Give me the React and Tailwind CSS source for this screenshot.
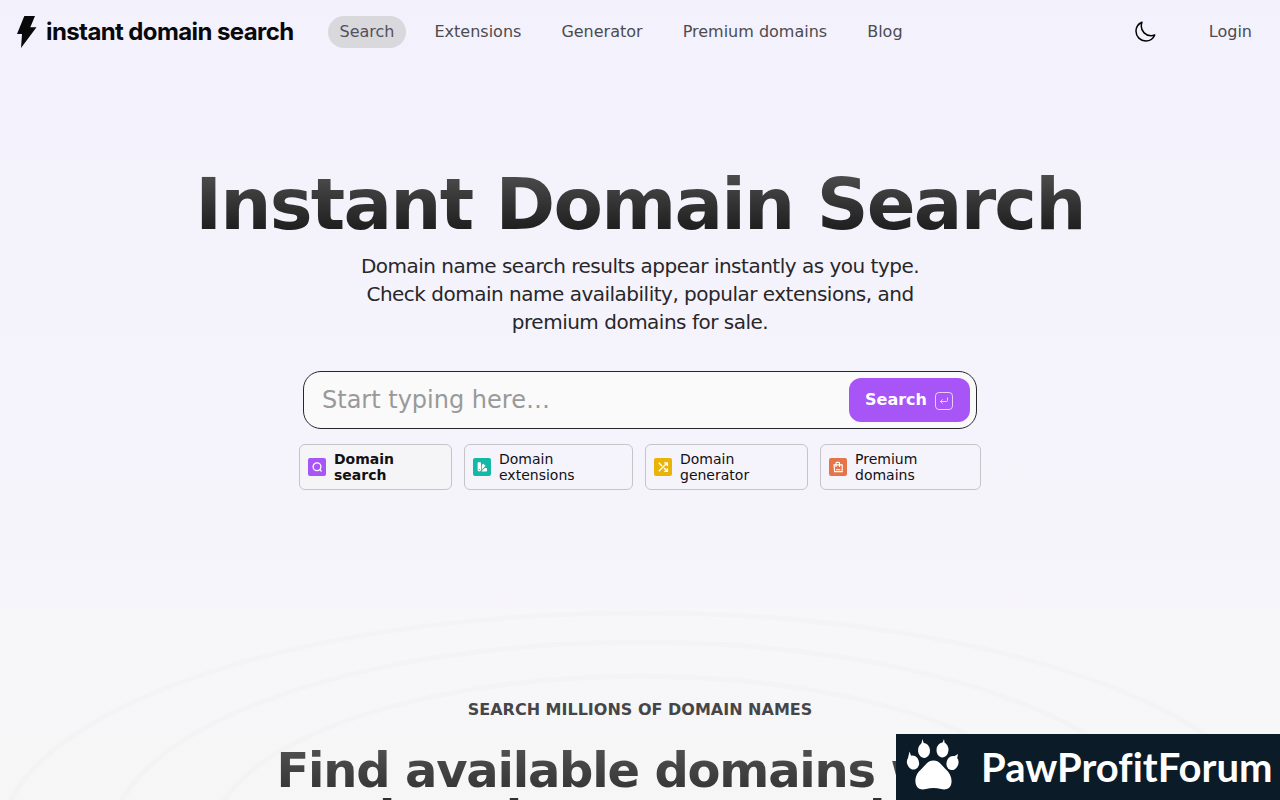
import React from "react";

const navItems = ["Search", "Extensions", "Generator", "Premium domains", "Blog"];

function SearchGlyph() {
  return (
    <svg viewBox="0 0 18 18" className="size-[18px]" aria-hidden="true">
      <rect width="18" height="18" rx="2" fill="#a855f7" />
      <g fill="none" stroke="#fff" strokeWidth="1.3" strokeLinecap="round">
        <circle cx="9" cy="8.700" r="3.900" />
        <path d="M11.700 11.500l1.500 1.600" />
      </g>
    </svg>
  );
}

function SwatchGlyph() {
  return (
    <svg viewBox="0 0 18 18" className="size-[18px]" aria-hidden="true">
      <rect width="18" height="18" rx="2" fill="#14b8a6" />
      <path fill="#fff" d="M5.200 4.300h2.200q.6 0 .6.600v6.800a1.700 1.700 0 0 1-3.400 0V4.900q0-.6.600-.6zM8.800 7.100l1.100-1.100q.4-.4.800 0l1.500 1.500q.4.400 0 .8l-3.400 3.400zM9.500 12.200l2.200-2.200h1.700q.6 0 .6.600v2.200q0 .6-.6.600H8.300z" />
      <circle cx="6.300" cy="11.600" r=".6" fill="#14b8a6" />
    </svg>
  );
}

function ShuffleGlyph() {
  return (
    <svg viewBox="0 0 18 18" className="size-[18px]" aria-hidden="true">
      <rect width="18" height="18" rx="2" fill="#eab308" />
      <path fill="none" stroke="#fff" strokeWidth="1.300" d="M4.800 13.200L13 5M10.200 4.800h3.200v3.200M4.800 4.800l3.200 3.200M10 10l3.200 3.200M13.400 10.200v3.200h-3.200" />
    </svg>
  );
}

function BagGlyph() {
  return (
    <svg viewBox="0 0 18 18" className="size-[18px]" aria-hidden="true">
      <rect width="18" height="18" rx="2" fill="#e57548" />
      <g fill="none" stroke="#fff" strokeWidth="1.100">
        <path d="M5 6.900h8.200v6.700H5.600zM7 9V5.300q0-.9.900-.9h1.700q.9 0 .9.900V9" />
        <path d="M7 11.700h4.400" />
      </g>
    </svg>
  );
}

const tools = [
  { label: ["Domain", "search"], Icon: SearchGlyph, style: "w-[153px] bg-[#f5f5f7] font-bold" },
  { label: ["Domain", "extensions"], Icon: SwatchGlyph, style: "w-[169px]" },
  { label: ["Domain", "generator"], Icon: ShuffleGlyph, style: "w-[163px]" },
  { label: ["Premium", "domains"], Icon: BagGlyph, style: "w-[161px]" },
];

function Header() {
  return (
    <header className="flex h-16 items-center px-4">
      <a href="#" className="flex items-center gap-2.5 text-[#09090b]">
        <svg viewBox="0 0 20 32" className="h-8 w-5 overflow-visible" fill="currentColor" aria-hidden="true">
          <path d="M8.300 0H19L14.300 11.200H20.500L5 32 6 18H1z" />
        </svg>
        <span className="whitespace-nowrap font-['Inter',sans-serif] text-2xl font-bold leading-8 tracking-tight">
          instant domain search
        </span>
      </a>
      <nav className="ml-[34px] flex gap-4">
        {navItems.map((item, i) => (
          <a
            key={item}
            href="#"
            className={
              i === 0
                ? "rounded-full bg-[#d9d8dd] px-3 py-1 text-[#52525b]"
                : "rounded-full px-3 py-1 text-[#4b4b50]"
            }
          >
            {item}
          </a>
        ))}
      </nav>
      <div className="ml-auto flex items-center gap-[52px] pr-3">
        <button type="button" aria-label="Toggle dark mode" className="text-black">
          <svg viewBox="0 0 24 24" className="size-6" fill="none" stroke="currentColor" strokeWidth="1.500" strokeLinecap="round" strokeLinejoin="round" aria-hidden="true">
            <path d="M21.752 15.002A9.718 9.718 0 0 1 18 15.750c-5.385 0-9.750-4.365-9.750-9.750 0-1.330.266-2.597.748-3.752A9.753 9.753 0 0 0 3 11.250C3 16.635 7.365 21 12.750 21a9.753 9.753 0 0 0 9.002-5.998Z" />
          </svg>
        </button>
        <a href="#" className="text-[#4b4b50]">Login</a>
      </div>
    </header>
  );
}

function SearchForm() {
  return (
    <form
      className="mx-auto flex h-[58px] w-full max-w-[674px] items-center rounded-[18px] border border-[#27272a] bg-[#fafafa] pl-[18px] pr-1.5"
      onSubmit={(e) => e.preventDefault()}
    >
      <input
        type="text"
        aria-label="Search for a domain name"
        placeholder="Start typing here…"
        className="min-w-0 flex-1 bg-transparent text-2xl text-[#27272a] outline-none placeholder:text-[#999999]"
      />
      <button type="submit" className="flex h-11 w-[121px] items-center gap-2 rounded-xl bg-[#a855f7] px-4 font-bold text-white">
        Search
        <svg viewBox="0 0 18 18" className="mt-0.5 size-[18px]" fill="none" stroke="#fff" strokeOpacity=".7" aria-hidden="true">
          <rect x=".5" y=".5" width="17" height="17" rx="3.500" />
          <path d="M12.500 5.500v3q0 1-1 1h-6M7.700 7.300L5.500 9.500l2.200 2.200" />
        </svg>
      </button>
    </form>
  );
}

function Banner() {
  return (
    <aside className="fixed bottom-0 right-0 flex h-[66px] w-96 items-center bg-[#0b1b27] text-white">
      <svg viewBox="0 0 54 52" className="mb-1 ml-2.5 h-[52px] w-[54px] shrink-0 overflow-visible" fill="currentColor" aria-hidden="true">
        <path d="M27.500 21.500C21.500 21.500 19.500 26.500 14.500 31 10.500 34.500 9 39 9.500 43.500 10.300 49.500 14.500 51.500 20 50Q27.500 48 35 50C40.500 51.500 45 49 45.500 43.500 46 39 44 34.500 40.500 31 35.500 26.500 33.500 21.500 27.500 21.500z" />
        <ellipse cx="18" cy="11.500" rx="6" ry="7.500" transform="rotate(-6 18 11.500)" />
        <ellipse cx="36.500" cy="11" rx="6" ry="7.500" transform="rotate(6 36.500 11)" />
        <ellipse cx="7" cy="23.500" rx="6" ry="7.200" transform="rotate(-18 7 23.500)" />
        <ellipse cx="46.500" cy="24" rx="6" ry="7.200" transform="rotate(18 46.500 24)" />
        <path d="M15 6L16.500 0 18 5zM36 5L38 0 39 6zM2 19L3.500 12.500 5.500 18zM47 18L52 15 51 20z" />
      </svg>
      <span className="ml-[21px] font-['Lato',sans-serif] text-[40px] font-bold leading-[60px] [font-variant-ligatures:none]">
        PawProfitForum
      </span>
    </aside>
  );
}

export default function App() {
  return (
    <div className="min-h-screen bg-linear-to-b from-[#f3f1fc] to-[#f7f6fa] font-['DejaVu_Sans',sans-serif]">
      <Header />
      <main className="text-center">
        <section className="pb-[118px] pt-[104px]">
          <h1 className="bg-linear-to-b from-[#525252] to-[#171717] bg-clip-text text-7xl font-bold leading-[72px] tracking-tight text-transparent">
            Instant Domain Search
          </h1>
          <p className="mx-auto mt-3 max-w-[576px] text-xl leading-7 tracking-tight text-[#27272a]">
            Domain name search results appear instantly as you type. Check domain name availability, popular
            extensions, and premium domains for sale.
          </p>
          <div className="mt-[35px] px-4">
            <SearchForm />
            <div className="mt-[15px] flex flex-wrap justify-center gap-3">
              {tools.map(({ label, Icon, style }) => (
                <a
                  key={label.join(" ")}
                  href="#"
                  className={`flex h-[46px] items-center gap-2 rounded-md border border-[#c4c4c9] px-2 text-left text-sm leading-4 text-[#111113] ${style}`}
                >
                  <Icon />
                  <span>
                    {label[0]}
                    <br />
                    {label[1]}
                  </span>
                </a>
              ))}
            </div>
          </div>
        </section>
        <section className="relative isolate overflow-hidden bg-linear-to-b from-[#f7f7fa] to-[#f6f6f6] pt-[90px]">
          <svg
            viewBox="0 0 1280 240"
            preserveAspectRatio="none"
            className="absolute inset-0 -z-10 size-full"
            fill="none"
            stroke="#71717a"
            strokeOpacity=".025"
            strokeWidth="5"
            aria-hidden="true"
          >
            <ellipse cx="640" cy="240" rx="640" ry="235" />
            <ellipse cx="640" cy="240" rx="530" ry="205" />
            <ellipse cx="640" cy="240" rx="430" ry="170" />
          </svg>
          <h2 className="font-bold leading-6 text-[#464649]">SEARCH MILLIONS OF DOMAIN NAMES</h2>
          <p className="mx-auto mt-6 max-w-[800px] bg-linear-to-b from-[#525252] to-[#171717] bg-clip-text text-5xl font-bold leading-[48px] tracking-tight text-transparent">
            Find available domains with
            <br />
            domain name search.
          </p>
        </section>
      </main>
      <Banner />
    </div>
  );
}
